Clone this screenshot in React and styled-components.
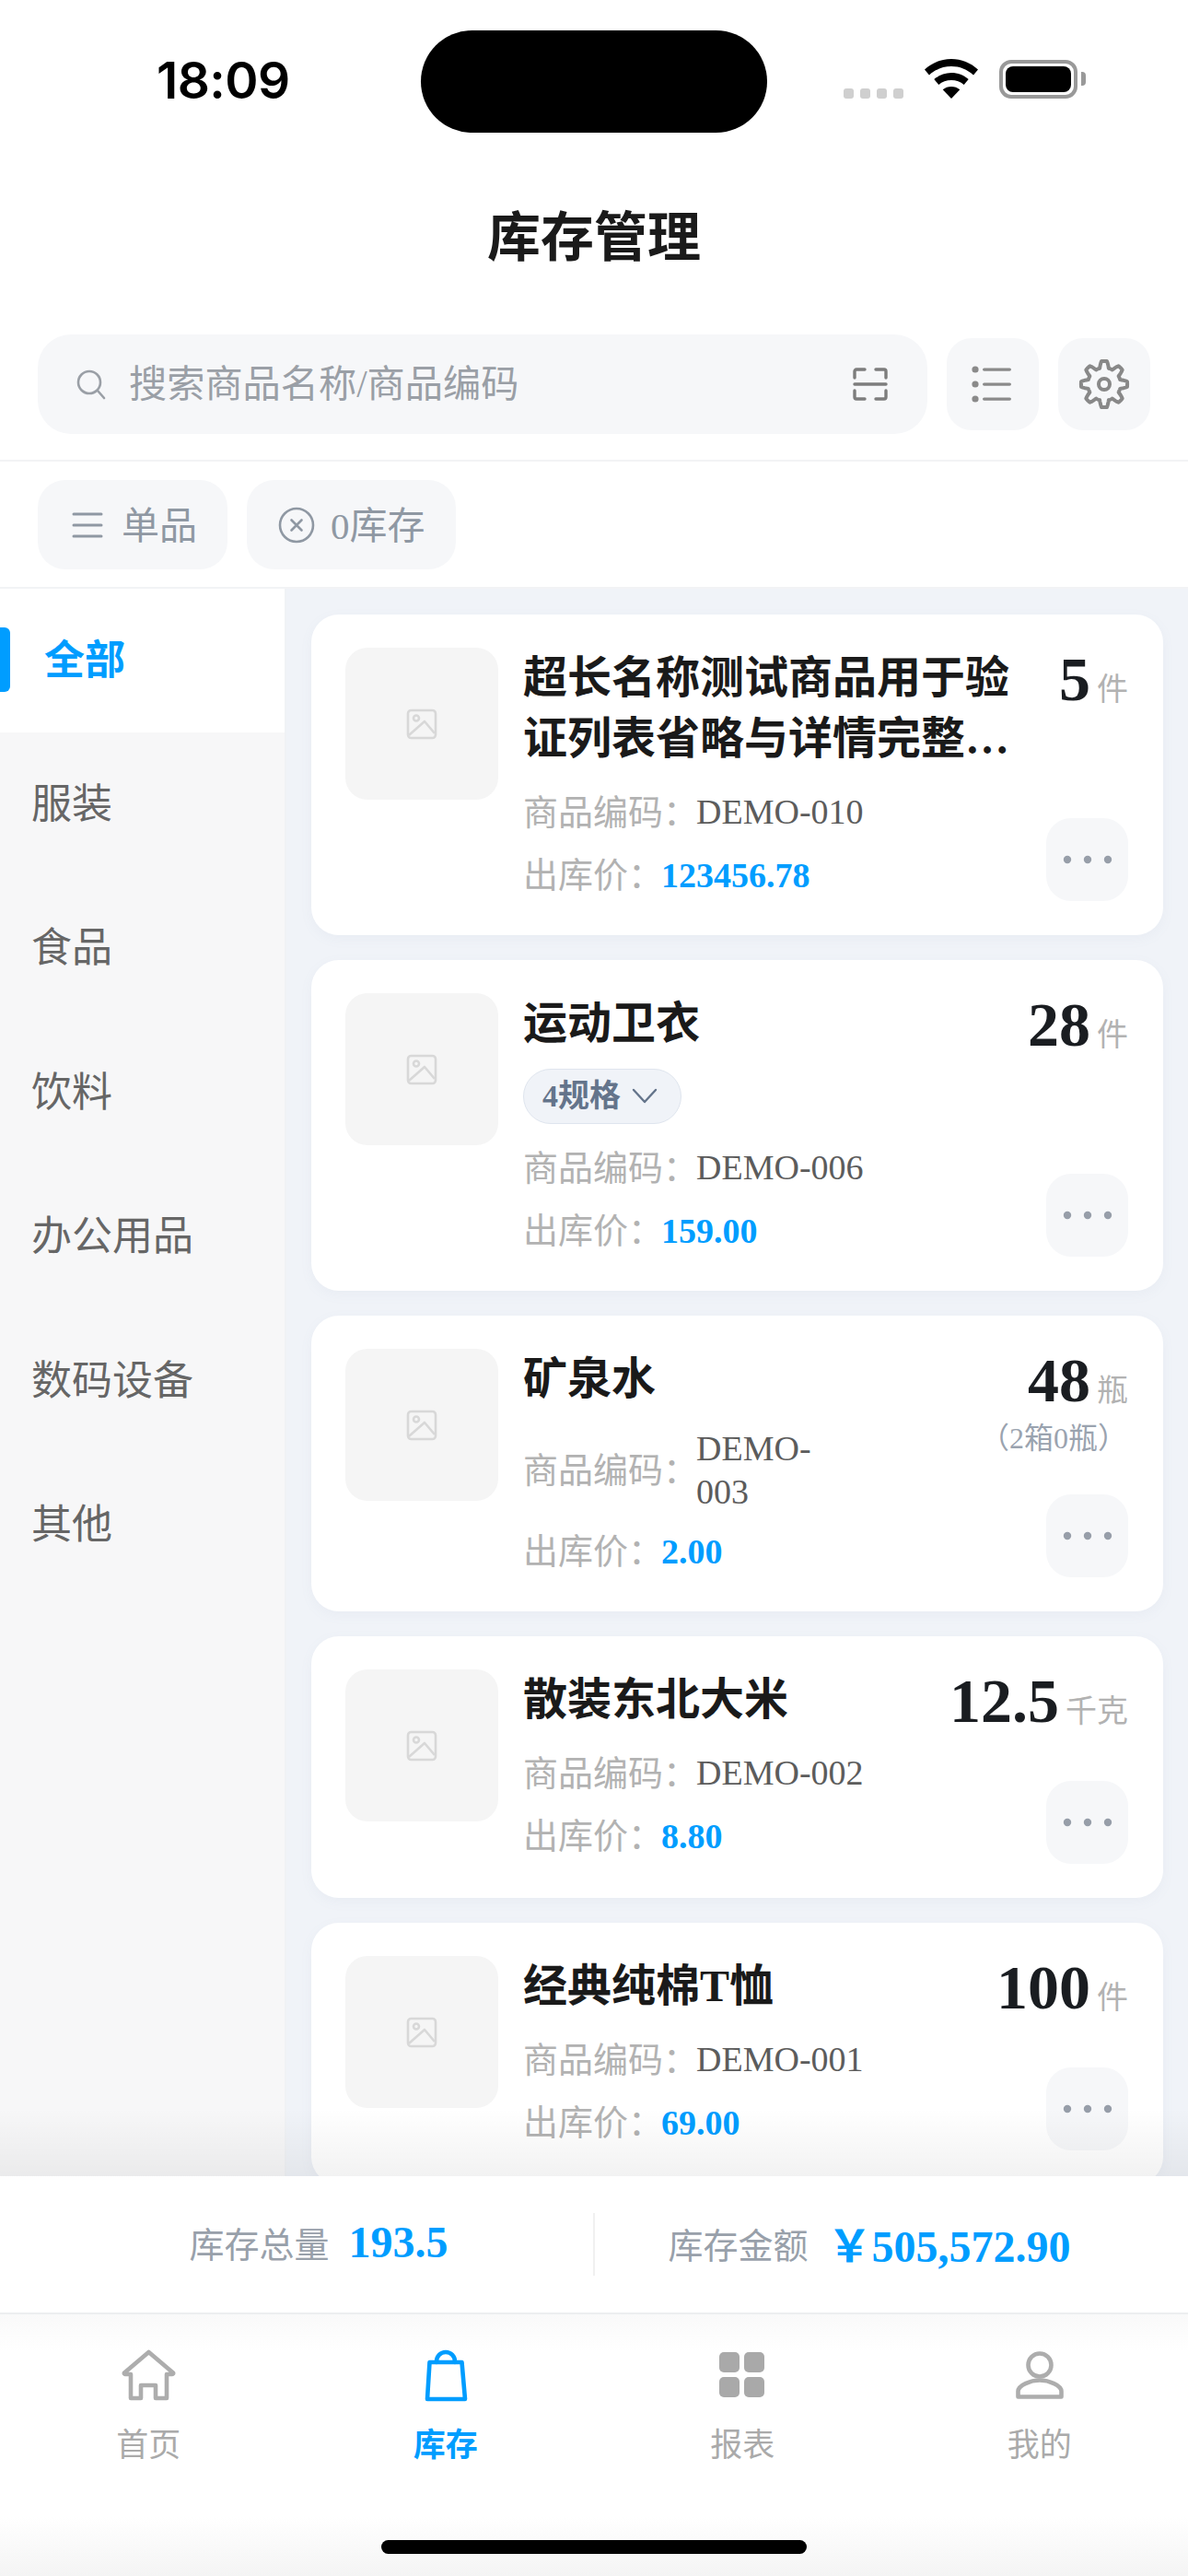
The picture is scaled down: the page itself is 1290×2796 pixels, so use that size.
import React from 'react';
import styled, { createGlobalStyle } from 'styled-components';

const BLUE = '#009dff';
const SERIF = '"Liberation Serif", "Noto Sans CJK SC", serif';

const GlobalStyle = createGlobalStyle`
  html, body {
    margin: 0;
    padding: 0;
    background: #fff;
  }
  * {
    box-sizing: border-box;
  }
`;

const categories = ['全部', '服装', '食品', '饮料', '办公用品', '数码设备', '其他'];

const products = [
  {
    name: '超长名称测试商品用于验证列表省略与详情完整…',
    code: 'DEMO-010',
    price: '123456.78',
    qty: '5',
    unit: '件',
  },
  {
    name: '运动卫衣',
    spec: '4规格',
    code: 'DEMO-006',
    price: '159.00',
    qty: '28',
    unit: '件',
  },
  {
    name: '矿泉水',
    code: 'DEMO-003',
    codeMax: 130,
    price: '2.00',
    qty: '48',
    unit: '瓶',
    sub: '（2箱0瓶）',
  },
  { name: '散装东北大米', code: 'DEMO-002', price: '8.80', qty: '12.5', unit: '千克' },
  { name: '经典纯棉T恤', code: 'DEMO-001', price: '69.00', qty: '100', unit: '件' },
];

// 8 rounded teeth, sampled around the circle
const gearPath = () => {
  const points = [];
  for (let i = 0; i < 160; i++) {
    const a = (i / 160) * Math.PI * 2;
    const wave = Math.max(-1, Math.min(1, Math.cos(a * 8) * 1.7));
    const r = 21.5 + wave * 3.6;
    points.push(`${(30 + r * Math.sin(a)).toFixed(2)} ${(30 - r * Math.cos(a)).toFixed(2)}`);
  }
  return `M${points.join('L')}Z`;
};

const SearchIcon = () => (
  <svg width="36" height="36" viewBox="0 0 36 36" fill="none" stroke="#9a9fa6" strokeWidth="2.6" strokeLinecap="round">
    <circle cx="16" cy="16" r="12" />
    <path d="M25 25l7 8" />
  </svg>
);

const ScanIcon = () => (
  <svg width="38" height="38" viewBox="0 0 38 38" fill="none" stroke="#7d7d7d" strokeWidth="3.4" strokeLinecap="round" strokeLinejoin="round">
    <path d="M13 3H4a2 2 0 0 0-2 2v7" />
    <path d="M25 3h9a2 2 0 0 1 2 2v7" />
    <path d="M2 26v7a2 2 0 0 0 2 2h9" />
    <path d="M36 26v7a2 2 0 0 1-2 2h-9" />
    <path d="M2 19h34" />
  </svg>
);

const ListIcon = () => (
  <svg width="48" height="44" viewBox="0 0 48 44" fill="#8a8a8a" stroke="none">
    <circle cx="5" cy="6" r="3.6" />
    <circle cx="5" cy="22" r="3.6" />
    <circle cx="5" cy="38" r="3.6" />
    <rect x="13" y="4.4" width="31" height="3.4" rx="1.7" />
    <rect x="13" y="20.4" width="31" height="3.4" rx="1.7" />
    <rect x="13" y="36.4" width="31" height="3.4" rx="1.7" />
  </svg>
);

const GearIcon = () => (
  <svg width="60" height="60" viewBox="0 0 60 60" fill="none" stroke="#888" strokeWidth="4" strokeLinejoin="round">
    <path d={gearPath()} />
    <circle cx="30" cy="30" r="6" />
  </svg>
);

const LinesIcon = () => (
  <svg width="40" height="32" viewBox="0 0 40 32" fill="none" stroke="#8f98a3" strokeWidth="3" strokeLinecap="round">
    <path d="M5 4h30M5 16h30M5 28h30" />
  </svg>
);

const CircleXIcon = () => (
  <svg width="40" height="40" viewBox="0 0 40 40" fill="none" stroke="#8f98a3" strokeWidth="2.6" strokeLinecap="round">
    <circle cx="20" cy="20" r="18" />
    <path d="M14.500 14.500l11 11M25.500 14.500l-11 11" />
  </svg>
);

const ImageIcon = () => (
  <svg width="34" height="34" viewBox="0 0 34 34" fill="none" stroke="#d8d8d8" strokeWidth="2.6" strokeLinejoin="round">
    <rect x="2" y="2" width="30" height="30" rx="3.5" />
    <circle cx="11" cy="10.500" r="3" />
    <path d="M3 29L20 14l11 13" />
  </svg>
);

const ChevronIcon = () => (
  <svg width="30" height="30" viewBox="0 0 30 30" fill="none" stroke="#64748b" strokeWidth="2.4" strokeLinecap="round" strokeLinejoin="round">
    <path d="M3 8l12 13L27 8" />
  </svg>
);

const DotsIcon = () => (
  <svg width="54" height="10" viewBox="0 0 54 10" fill="#979ea9">
    <circle cx="5" cy="5" r="4.2" />
    <circle cx="27" cy="5" r="4.2" />
    <circle cx="49" cy="5" r="4.2" />
  </svg>
);

const HomeIcon = () => (
  <svg width="60" height="60" viewBox="0 0 60 60" fill="none" stroke="#adadad" strokeWidth="4.6" strokeLinecap="round" strokeLinejoin="round">
    <path d="M30.500 5L57 27.500a1 1 0 0 1-1 1.500h-6v26H38V41h-16v14H11V29H5a1 1 0 0 1-1-1.500z" />
  </svg>
);

const BagIcon = () => (
  <svg width="60" height="60" viewBox="0 0 60 60" fill="none" stroke={BLUE} strokeWidth="4.6" strokeLinecap="round" strokeLinejoin="round">
    <path d="M12.500 16h35L51 56H10z" />
    <path d="M20 16v-1a10 10 0 0 1 20 0v1" />
  </svg>
);

const GridIcon = () => (
  <svg width="60" height="60" viewBox="0 0 60 60" fill="#a9a9a9">
    <rect x="5" y="5" width="22" height="22" rx="5" />
    <rect x="32" y="5" width="22" height="22" rx="5" />
    <rect x="5" y="32" width="22" height="22" rx="5" />
    <rect x="32" y="32" width="22" height="22" rx="5" />
  </svg>
);

const PersonIcon = () => (
  <svg width="60" height="60" viewBox="0 0 60 60" fill="none" stroke="#adadad" strokeWidth="4.6" strokeLinejoin="round">
    <circle cx="30" cy="19" r="12.5" />
    <path d="M6.500 53.500v-6C6.500 41 20 35.500 30 35.500S53.500 41 53.500 47.500v6z" />
  </svg>
);

const WifiIcon = () => (
  <svg width="58" height="43" viewBox="0 0 58 43" fill="#000">
    <path d="M29 0c11 0 21 4.200 29 11.500l-5 6C46.300 11.300 38 8 29 8S11.700 11.300 5 17.500l-5-6C8 4.200 18 0 29 0z" />
    <path d="M29 15c7 0 13.500 2.600 18.700 7l-5 6C39 24.800 34.200 23 29 23s-10 1.800-13.700 5l-5-6C15.500 17.600 22 15 29 15z" />
    <path d="M29 30c3.500 0 6.800 1.200 9.300 3.300L29 43l-9.300-9.700C22.200 31.200 25.500 30 29 30z" />
  </svg>
);

const tabs = [
  { label: '首页', Icon: HomeIcon },
  { label: '库存', Icon: BagIcon, active: true },
  { label: '报表', Icon: GridIcon },
  { label: '我的', Icon: PersonIcon },
];

const ProductCard = ({ item }) => (
  <Card>
    <Thumb>
      <ImageIcon />
    </Thumb>
    <CardBody>
      <ProductName>{item.name}</ProductName>
      {item.spec && (
        <SpecPill>
          {item.spec}
          <ChevronIcon />
        </SpecPill>
      )}
      <InfoRow $first>
        <InfoLabel>商品编码：</InfoLabel>
        <CodeValue $max={item.codeMax}>{item.code}</CodeValue>
      </InfoRow>
      <InfoRow>
        <InfoLabel>出库价：</InfoLabel>
        <PriceValue>{item.price}</PriceValue>
      </InfoRow>
    </CardBody>
    <CardSide>
      <QtyRow>
        <QtyNumber>{item.qty}</QtyNumber>
        <QtyUnit>{item.unit}</QtyUnit>
      </QtyRow>
      {item.sub && <QtySub>{item.sub}</QtySub>}
      <MoreButton>
        <DotsIcon />
      </MoreButton>
    </CardSide>
  </Card>
);

const App = () => {
  return (
    <>
      <GlobalStyle />
      <Screen>
        <StatusBar>
          <Time>18:09</Time>
          <Island />
          <StatusIcons>
            <SignalDots>
              <SignalDot />
              <SignalDot />
              <SignalDot />
              <SignalDot />
            </SignalDots>
            <WifiIcon />
            <Battery>
              <BatteryFill />
            </Battery>
          </StatusIcons>
        </StatusBar>

        <PageTitle>库存管理</PageTitle>

        <SearchRow>
          <SearchBox>
            <SearchIcon />
            <Placeholder>搜索商品名称/商品编码</Placeholder>
            <ScanIcon />
          </SearchBox>
          <SquareButton>
            <ListIcon />
          </SquareButton>
          <SquareButton>
            <GearIcon />
          </SquareButton>
        </SearchRow>

        <FilterRow>
          <FilterChip>
            <LinesIcon />
            <ChipText>单品</ChipText>
          </FilterChip>
          <FilterChip>
            <CircleXIcon />
            <ChipText>0库存</ChipText>
          </FilterChip>
        </FilterRow>

        <Main>
          <Sidebar>
            {categories.map((name, i) => (
              <CategoryItem key={name} $active={i === 0}>
                {name}
              </CategoryItem>
            ))}
          </Sidebar>
          <ProductList>
            {products.map((item) => (
              <ProductCard key={item.code} item={item} />
            ))}
          </ProductList>
        </Main>

        <Summary>
          <SummaryCell>
            <SummaryLabel>库存总量</SummaryLabel>
            <SummaryValue>193.5</SummaryValue>
          </SummaryCell>
          <SummaryDivider />
          <SummaryCell $low>
            <SummaryLabel>库存金额</SummaryLabel>
            <SummaryValue>￥505,572.90</SummaryValue>
          </SummaryCell>
        </Summary>

        <TabBar>
          <Tabs>
            {tabs.map(({ label, Icon, active }) => (
              <TabItem key={label} $active={active}>
                <Icon />
                {label}
              </TabItem>
            ))}
          </Tabs>
          <HomeIndicator />
        </TabBar>
      </Screen>
    </>
  );
};

const Screen = styled.div`
  width: 1290px;
  height: 2796px;
  display: flex;
  flex-direction: column;
  overflow: hidden;
  background: #fff;
  font-family: "Noto Sans CJK SC", "Liberation Sans", sans-serif;
`;

const StatusBar = styled.div`
  height: 150px;
  padding-top: 33px;
  display: grid;
  grid-template-columns: 457px 376px 1fr;
  align-items: start;
  flex-shrink: 0;
`;

const Time = styled.div`
  padding-left: 170px;
  height: 111px;
  line-height: 108px;
  font-family: Inter, "Liberation Sans", sans-serif;
  font-size: 55px;
  font-weight: 600;
  letter-spacing: -0.6px;
  color: #000;
`;

const Island = styled.div`
  height: 111px;
  background: #000;
  border-radius: 56px;
`;

const StatusIcons = styled.div`
  height: 74px;
  padding-left: 83px;
  display: flex;
  align-items: flex-end;
`;

const SignalDots = styled.div`
  display: flex;
  gap: 7px;
  margin-right: 23px;
`;

const SignalDot = styled.span`
  width: 11px;
  height: 11px;
  border-radius: 3px;
  background: #cfcfcf;
`;

const Battery = styled.div`
  position: relative;
  width: 85px;
  height: 42px;
  margin-left: 23px;
  padding: 3px;
  border: 4px solid #999;
  border-radius: 13px;

  &::after {
    content: '';
    position: absolute;
    right: -13px;
    top: 9px;
    width: 5px;
    height: 15px;
    background: #999;
    border-radius: 0 4px 4px 0;
  }
`;

const BatteryFill = styled.div`
  height: 100%;
  background: #000;
  border-radius: 8px;
`;

const PageTitle = styled.div`
  height: 213px;
  line-height: 207px;
  text-align: center;
  font-size: 58px;
  font-weight: 700;
  color: #1a1a1a;
  flex-shrink: 0;
`;

const SearchRow = styled.div`
  display: flex;
  align-items: center;
  gap: 21px;
  padding: 0 41px 28px;
  border-bottom: 2px solid #f2f3f5;
  flex-shrink: 0;
`;

const SearchBox = styled.div`
  width: 966px;
  height: 108px;
  padding: 0 43px 0 40px;
  display: flex;
  align-items: center;
  background: #f6f7f9;
  border-radius: 36px;
  flex-shrink: 0;
`;

const Placeholder = styled.div`
  flex: 1;
  margin-left: 23px;
  padding-bottom: 9px;
  font-family: ${SERIF};
  font-size: 41.2px;
  color: #9a9fa6;
  white-space: nowrap;
`;

const SquareButton = styled.div`
  width: 100px;
  height: 100px;
  display: flex;
  align-items: center;
  justify-content: center;
  background: #f6f7f9;
  border-radius: 27px;
  flex-shrink: 0;
`;

const FilterRow = styled.div`
  display: flex;
  gap: 21px;
  padding: 20px 41px 19px;
  flex-shrink: 0;
`;

const FilterChip = styled.div`
  height: 97px;
  padding: 0 33px 0 34px;
  display: flex;
  align-items: center;
  gap: 17px;
  background: #f6f7f9;
  border-radius: 30px;
`;

const ChipText = styled.span`
  padding-bottom: 6px;
  font-family: ${SERIF};
  font-size: 41px;
  color: #8f98a3;
`;

const Main = styled.div`
  flex: 1;
  min-height: 0;
  display: flex;
  border-top: 2px solid #f2f3f5;
`;

const Sidebar = styled.div`
  width: 311px;
  flex-shrink: 0;
  background: #f7f7f8;
  border-right: 2px solid #f0f2f5;
`;

const CategoryItem = styled.div`
  position: relative;
  height: 156.4px;
  padding-left: ${(p) => (p.$active ? '48px' : '34px')};
  padding-bottom: 9px;
  display: flex;
  align-items: center;
  font-size: 44px;
  font-weight: ${(p) => (p.$active ? 700 : 400)};
  color: ${(p) => (p.$active ? BLUE : '#666')};
  background: ${(p) => (p.$active ? '#fff' : 'transparent')};

  ${(p) =>
    p.$active &&
    `&::before {
      content: '';
      position: absolute;
      left: 0;
      top: 42px;
      width: 11px;
      height: 70px;
      background: ${BLUE};
      border-radius: 0 6px 6px 0;
    }`}
`;

const ProductList = styled.div`
  flex: 1;
  min-width: 0;
  padding: 28px 27px 0 27px;
  display: flex;
  flex-direction: column;
  gap: 27px;
  overflow: hidden;
  background: #f0f3f8;
`;

const Card = styled.div`
  display: flex;
  flex-shrink: 0;
  min-height: 284px;
  padding: 36px 38px 37px 37px;
  background: #fff;
  border-radius: 30px;
  box-shadow: 0 4px 14px rgba(120, 140, 170, 0.06);
  font-family: ${SERIF};
`;

const Thumb = styled.div`
  width: 166px;
  height: 165px;
  display: flex;
  align-items: center;
  justify-content: center;
  background: #f5f5f5;
  border-radius: 24px;
  flex-shrink: 0;
`;

const CardBody = styled.div`
  flex: 1;
  min-width: 0;
  margin-left: 27px;
  padding-bottom: 1px;
  display: flex;
  flex-direction: column;
  align-items: flex-start;
`;

const ProductName = styled.div`
  max-width: 532px;
  font-size: 48px;
  font-weight: 700;
  line-height: 66px;
  color: #1a1a1a;
`;

const SpecPill = styled.div`
  height: 60px;
  margin-top: 16px;
  margin-bottom: 1px;
  padding: 0 24px 0 20px;
  display: flex;
  align-items: center;
  gap: 11px;
  background: #f0f3f8;
  border: 1px solid #dfe5ee;
  border-radius: 30px;
  font-size: 34px;
  line-height: 54px;
  font-weight: 700;
  color: #64748b;
`;

const InfoRow = styled.div`
  min-height: 55px;
  margin-top: ${(p) => (p.$first ? '19px' : '13px')};
  display: flex;
  align-items: center;
  font-size: 38px;
  line-height: 50px;
`;

const InfoLabel = styled.span`
  margin-right: -2px;
  color: #b2b2b2;
  flex-shrink: 0;
`;

const CodeValue = styled.span`
  max-width: ${(p) => (p.$max ? `${p.$max}px` : 'none')};
  line-height: 47px;
  color: #5c5c5c;
`;

const PriceValue = styled.span`
  font-weight: 700;
  color: ${BLUE};
`;

const CardSide = styled.div`
  margin-left: 16px;
  display: flex;
  flex-direction: column;
  align-items: flex-end;
  flex-shrink: 0;
`;

const QtyRow = styled.div`
  display: flex;
  align-items: baseline;
  gap: 7px;
  line-height: 68px;
`;

const QtyNumber = styled.span`
  font-size: 68px;
  font-weight: 700;
  color: #1a1d21;
`;

const QtyUnit = styled.span`
  font-size: 34px;
  color: #b2b2b2;
`;

const QtySub = styled.div`
  margin-top: -4px;
  margin-right: 1px;
  font-size: 32px;
  line-height: 42px;
  color: #9aa3af;
`;

const MoreButton = styled.div`
  width: 89px;
  height: 90px;
  margin-top: auto;
  display: flex;
  align-items: center;
  justify-content: center;
  background: #f6f7f9;
  border-radius: 27px;
`;

const Summary = styled.div`
  position: relative;
  height: 150px;
  padding: 0 48px;
  display: flex;
  align-items: center;
  background: #fff;
  border-bottom: 2px solid #eceef0;
  flex-shrink: 0;

  &::before {
    content: '';
    position: absolute;
    left: 0;
    right: 0;
    top: -74px;
    height: 74px;
    background: linear-gradient(to bottom, rgba(0, 0, 0, 0), rgba(0, 0, 0, 0.05));
  }
`;

const SummaryCell = styled.div`
  flex: 1;
  display: flex;
  align-items: center;
  justify-content: center;
  gap: 21px;
  padding-bottom: ${(p) => (p.$low ? '4px' : '6px')};
  font-family: ${SERIF};
`;

const SummaryDivider = styled.div`
  width: 2px;
  height: 68px;
  background: #f0f0f0;
`;

const SummaryLabel = styled.span`
  font-size: 38px;
  color: #98a0aa;
`;

const SummaryValue = styled.span`
  font-size: 48px;
  font-weight: 700;
  color: ${BLUE};
`;

const TabBar = styled.div`
  height: 284px;
  flex-shrink: 0;
  display: flex;
  flex-direction: column;
  background: linear-gradient(
    to bottom,
    #f9f9f9 0,
    #fff 40px,
    #fff 220px,
    #f4f4f4 100%
  );
`;

const Tabs = styled.div`
  display: grid;
  grid-template-columns: repeat(4, 1fr);
  padding-top: 36px;
`;

const TabItem = styled.div`
  display: flex;
  flex-direction: column;
  align-items: center;
  gap: 18px;
  font-size: 35px;
  line-height: 50px;
  font-weight: ${(p) => (p.$active ? 700 : 400)};
  color: ${(p) => (p.$active ? BLUE : '#aaa')};
`;

const HomeIndicator = styled.div`
  width: 462px;
  height: 15px;
  margin-top: 81px;
  align-self: center;
  background: #000;
  border-radius: 8px;
`;

export default App;
